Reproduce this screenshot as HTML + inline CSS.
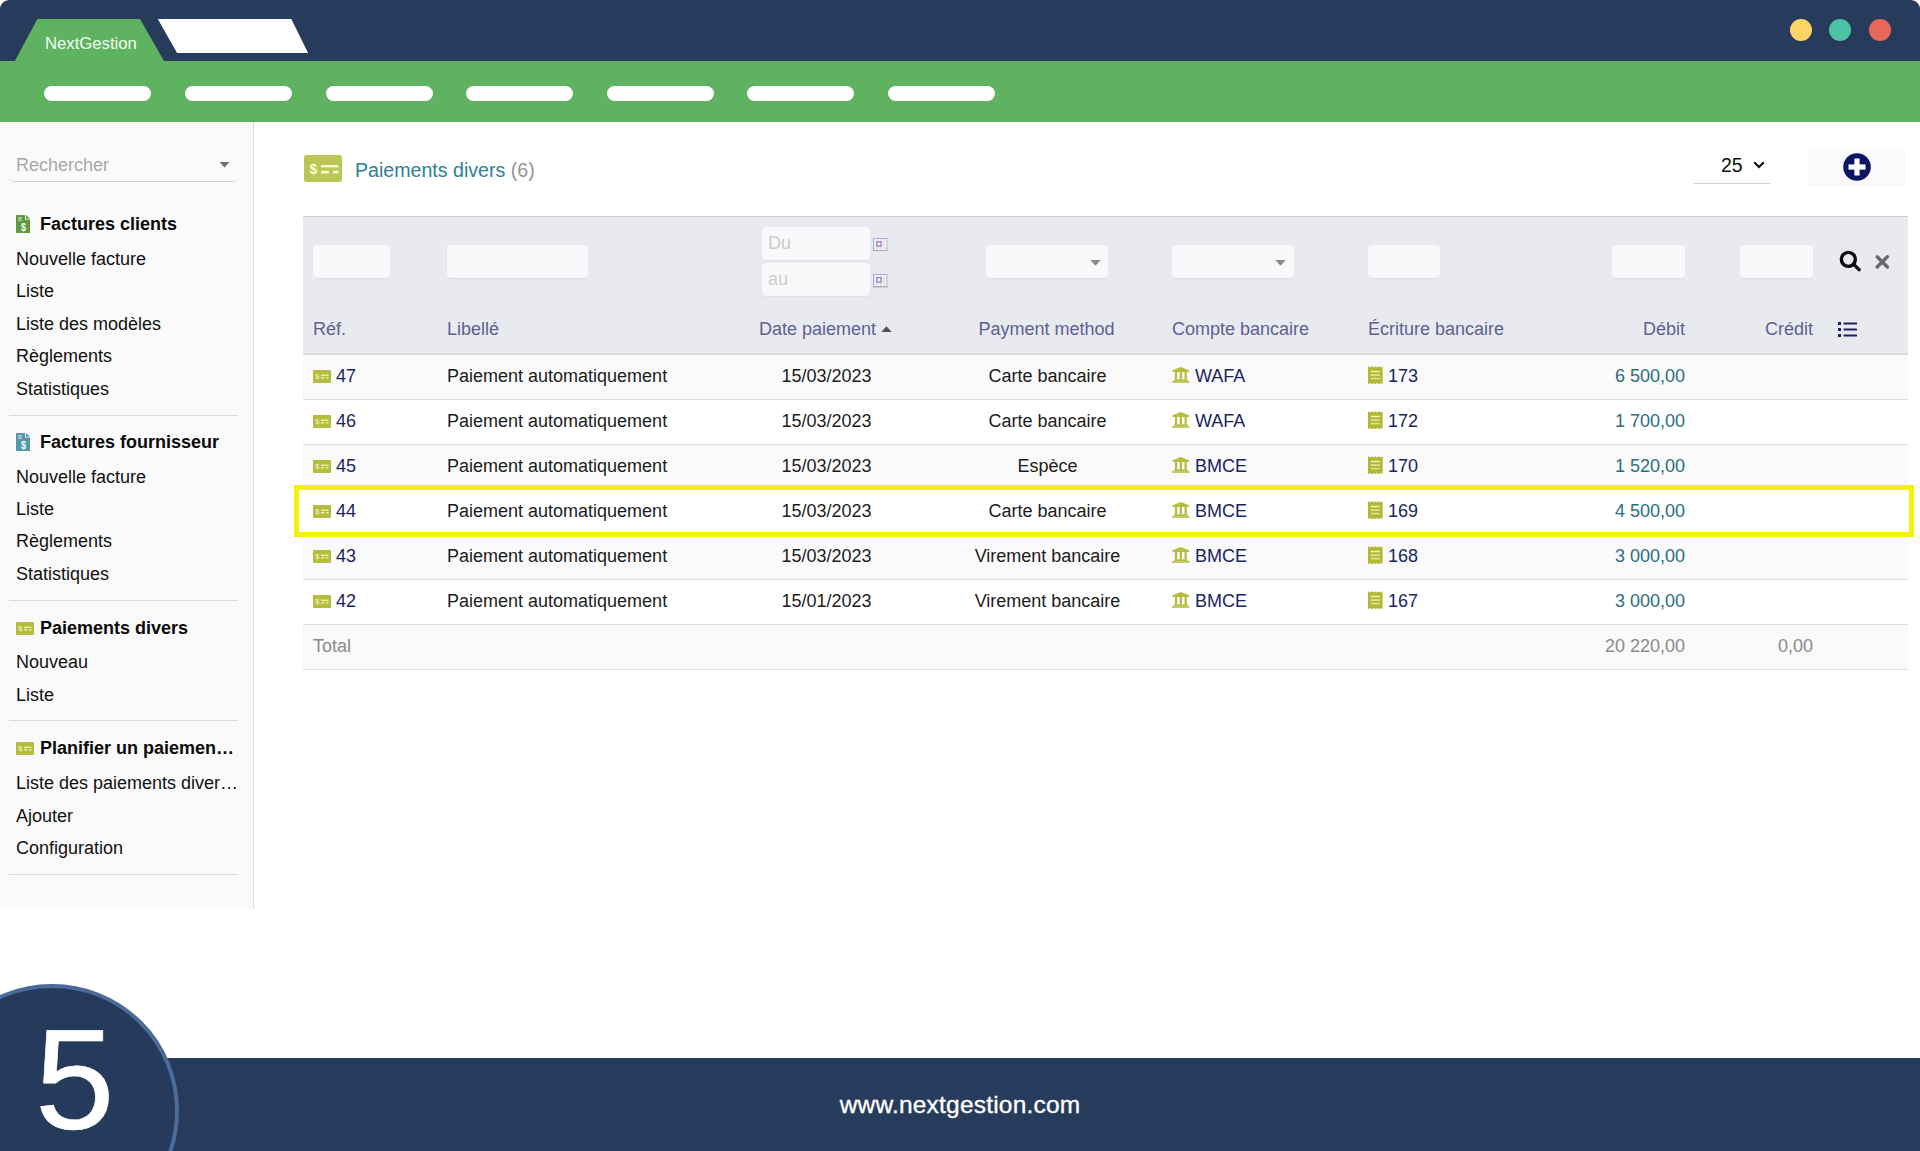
<!DOCTYPE html>
<html lang="fr">
<head>
<meta charset="utf-8">
<title>NextGestion - Paiements divers</title>
<style>
*{box-sizing:border-box;}
html,body{margin:0;padding:0;}
html{width:1920px;height:1151px;overflow:hidden;}
body{width:1920px;height:1151px;position:relative;overflow:hidden;background:#fff;font-family:"Liberation Sans",sans-serif;font-size:18px;color:#1a1a1a;}
.abs{position:absolute;}
#topbar{left:0;top:0;width:1920px;height:61px;background:#273b5c;border-radius:9px 9px 0 0;}
#greenbar{left:0;top:61px;width:1920px;height:61px;background:#5fb260;}
#tabs{left:0;top:0;width:400px;height:62px;}
.tabname{left:45px;top:34px;font-size:16.7px;color:#f2fff0;line-height:20px;white-space:nowrap;}
.pill{top:86px;width:107px;height:15px;border-radius:8px;background:#fff;}
.dot{width:22px;height:22px;border-radius:50%;top:19px;}
/* sidebar */
#sidebar{left:0;top:122px;width:254px;height:787px;background:#fafafa;border-right:1px solid #dcdcdc;}
.sb{left:16px;white-space:nowrap;line-height:22px;font-size:18px;color:#111;}
.sbh{left:40px;font-weight:bold;color:#0a0a0a;}
.sep{left:9px;width:229px;height:1px;background:#dadada;}
/* footer */
#footer{left:0;top:1058px;width:1920px;height:93px;background:#273b5c;}
#circle{left:-74.7px;top:34.3px;width:253.4px;height:253.4px;border-radius:50%;background:#263a5b;border:4.6px solid #4b6b9a;}
#five{left:35px;top:1010px;font-size:143px;line-height:140px;height:140px;overflow:hidden;color:#fff;-webkit-text-stroke:0.6px #fff;}
#url{left:0;width:1920px;top:1090px;text-align:center;color:#fff;font-size:24.5px;line-height:30px;letter-spacing:0.2px;-webkit-text-stroke:0.35px #fff;}
/* content */
#title{left:355px;top:158px;font-size:19.6px;line-height:24px;color:#2b8196;white-space:nowrap;}
#title span{color:#949494;}
#thead{left:303px;top:216px;width:1605px;height:139px;background:#e9eaef;border-top:1px solid #c9c9ce;border-bottom:2px solid #dcdcdf;}
.inp{height:33px;background:#f9f9fb;border-radius:4px;top:245px;box-shadow:0 1px 1px rgba(0,0,0,0.05);}
.ph{color:#cbcbce;font-size:18px;line-height:33px;padding-left:6px;}
.th{top:318px;color:#5c6193;font-size:18px;line-height:22px;white-space:nowrap;}
.row{left:303px;width:1605px;height:45px;border-bottom:1px solid #dedede;}
.odd{background:#fafafa;}
.c{position:absolute;top:11px;line-height:22px;white-space:nowrap;font-size:18px;color:#1c1c1c;}
.nv{color:#1b1f63;}
.tl{color:#2a6f7d;}
.gr{color:#8a8a8a;}
.ctr{text-align:center;}
.rt{text-align:right;}
svg{position:absolute;display:block;}
</style>
</head>
<body>
<!-- window chrome -->
<div id="topbar" class="abs"></div>
<div id="greenbar" class="abs"></div>
<svg id="tabs" class="abs" viewBox="0 0 400 62">
  <polygon points="14.3,62 37.4,19 140,19 164.6,62" fill="#5fb260"/>
  <polygon points="157.8,19 291.3,19 308.1,52.9 177.1,52.9" fill="#ffffff"/>
</svg>
<div class="abs tabname">NextGestion</div>
<div class="abs dot" style="left:1790px;background:#fed466;"></div>
<div class="abs dot" style="left:1829px;background:#4dc2a2;"></div>
<div class="abs dot" style="left:1869px;background:#e86756;"></div>
<div class="abs pill" style="left:44px"></div>
<div class="abs pill" style="left:184.7px"></div>
<div class="abs pill" style="left:325.6px"></div>
<div class="abs pill" style="left:466px"></div>
<div class="abs pill" style="left:606.7px"></div>
<div class="abs pill" style="left:747.3px"></div>
<div class="abs pill" style="left:888px"></div>

<!-- SIDEBAR -->
<div id="sidebar" class="abs"></div>
<div class="abs" style="left:16px;top:154px;font-size:18px;line-height:22px;color:#a8a8a8;">Rechercher</div>
<svg style="left:219px;top:162px" width="11" height="6" viewBox="0 0 11 6"><path d="M0.5 0 H10.5 L5.5 5.6 Z" fill="#6f6f6f"/></svg>
<div class="abs" style="left:9px;top:150px;width:229px;height:31.5px;border-bottom:1.5px solid #d2d2d2;border-radius:5px;"></div>
<svg style="left:16px;top:214.5px" width="14" height="18" viewBox="0 0 14 18"><path d="M0 0.6 Q0 0 0.6 0 H9 V4.5 H14 V17.4 Q14 18 13.4 18 H0.6 Q0 18 0 17.4 Z" fill="#5e9a3e"/><path d="M10 0 L14 3.8 H10 Z" fill="#5e9a3e"/><rect x="2.2" y="2.4" width="3.6" height="1.1" fill="#dfeee0"/><rect x="2.2" y="4.6" width="3.6" height="1.1" fill="#dfeee0"/><text x="0" y="15.6" transform="translate(7.4 0) scale(0.85 1)" font-family="Liberation Sans, sans-serif" font-weight="bold" font-size="10.5" fill="#ffffff" text-anchor="middle">$</text></svg>
<div class="abs sb sbh" style="top:213px;">Factures clients</div>
<div class="abs sb" style="top:248px;">Nouvelle facture</div>
<div class="abs sb" style="top:280px;">Liste</div>
<div class="abs sb" style="top:313px;">Liste des modèles</div>
<div class="abs sb" style="top:345px;">Règlements</div>
<div class="abs sb" style="top:378px;">Statistiques</div>
<div class="abs sep" style="top:415px;"></div>
<svg style="left:16px;top:433px" width="14" height="18" viewBox="0 0 14 18"><path d="M0 0.6 Q0 0 0.6 0 H9 V4.5 H14 V17.4 Q14 18 13.4 18 H0.6 Q0 18 0 17.4 Z" fill="#5598ae"/><path d="M10 0 L14 3.8 H10 Z" fill="#5598ae"/><rect x="2.2" y="2.4" width="3.6" height="1.1" fill="#dfeee0"/><rect x="2.2" y="4.6" width="3.6" height="1.1" fill="#dfeee0"/><text x="0" y="15.6" transform="translate(7.4 0) scale(0.85 1)" font-family="Liberation Sans, sans-serif" font-weight="bold" font-size="10.5" fill="#ffffff" text-anchor="middle">$</text></svg>
<div class="abs sb sbh" style="top:431px;">Factures fournisseur</div>
<div class="abs sb" style="top:466px;">Nouvelle facture</div>
<div class="abs sb" style="top:498px;">Liste</div>
<div class="abs sb" style="top:530px;">Règlements</div>
<div class="abs sb" style="top:563px;">Statistiques</div>
<div class="abs sep" style="top:600px;"></div>
<svg style="left:16px;top:622px" width="18" height="13" viewBox="0 0 18 13"><rect x="0" y="0" width="18" height="13" rx="1" fill="#b5bd3f"/><text x="4.3" y="9.3" font-family="Liberation Sans, sans-serif" font-weight="bold" font-size="7.5" fill="#e8eeb0" text-anchor="middle">$</text><rect x="8" y="4.6" width="7.5" height="1.3" fill="#eef3b8"/><rect x="8" y="7.2" width="3.4" height="1.3" fill="#eef3b8"/><rect x="13" y="7.2" width="2.5" height="1.3" fill="#eef3b8"/></svg>
<div class="abs sb sbh" style="top:617px;">Paiements divers</div>
<div class="abs sb" style="top:651px;">Nouveau</div>
<div class="abs sb" style="top:684px;">Liste</div>
<div class="abs sep" style="top:720px;"></div>
<svg style="left:16px;top:742px" width="18" height="13" viewBox="0 0 18 13"><rect x="0" y="0" width="18" height="13" rx="1" fill="#b5bd3f"/><text x="4.3" y="9.3" font-family="Liberation Sans, sans-serif" font-weight="bold" font-size="7.5" fill="#e8eeb0" text-anchor="middle">$</text><rect x="8" y="4.6" width="7.5" height="1.3" fill="#eef3b8"/><rect x="8" y="7.2" width="3.4" height="1.3" fill="#eef3b8"/><rect x="13" y="7.2" width="2.5" height="1.3" fill="#eef3b8"/></svg>
<div class="abs sb sbh" style="top:737px;width:197px;overflow:hidden;text-overflow:ellipsis;">Planifier un paiement divers</div>
<div class="abs sb" style="top:772px;width:224px;overflow:hidden;text-overflow:ellipsis;">Liste des paiements divers planifiés</div>
<div class="abs sb" style="top:805px;">Ajouter</div>
<div class="abs sb" style="top:837px;">Configuration</div>
<div class="abs sep" style="top:874px;"></div>
<svg style="left:304px;top:155px" width="38" height="27" viewBox="0 0 38 27"><rect x="0" y="0" width="38" height="27" rx="2.5" fill="#bcc656"/><text x="9.5" y="19" font-family="Liberation Sans, sans-serif" font-weight="bold" font-size="14" fill="#f6ffd0" text-anchor="middle">$</text><rect x="17" y="10" width="17.5" height="2.4" fill="#f6ffd0"/><rect x="17" y="15.8" width="8" height="2.6" fill="#f6ffd0"/><rect x="29" y="15.8" width="5.5" height="2.6" fill="#f6ffd0"/></svg>
<div id="title" class="abs">Paiements divers <span>(6)</span></div>
<div class="abs" style="left:1721px;top:154px;font-size:19.5px;line-height:22px;color:#111;">25</div>
<svg style="left:1753px;top:161px" width="12" height="8" viewBox="0 0 12 8"><path d="M1.2 1.2 L6 6 L10.8 1.2" fill="none" stroke="#111" stroke-width="2.2"/></svg>
<div class="abs" style="left:1694px;top:183px;width:76px;height:1px;background:#cfcfcf;"></div>
<div class="abs" style="left:1808px;top:148px;width:97px;height:38px;background:#fafafa;"></div>
<svg style="left:1842.7px;top:152.7px" width="28" height="28" viewBox="0 0 28 28"><circle cx="14" cy="14" r="13.8" fill="#0c1464"/><rect x="11.4" y="5.5" width="5.2" height="17" fill="#fff"/><rect x="5.5" y="11.4" width="17" height="5.2" fill="#fff"/></svg>
<div id="thead" class="abs"></div>
<div class="abs inp" style="left:313px;width:77px;"></div>
<div class="abs inp" style="left:447px;width:141px;"></div>
<div class="abs inp" style="left:986px;width:122px;"></div>
<div class="abs inp" style="left:1172px;width:122px;"></div>
<div class="abs inp" style="left:1368px;width:72px;"></div>
<div class="abs inp" style="left:1612px;width:73px;"></div>
<div class="abs inp" style="left:1740px;width:73px;"></div>
<div class="abs inp ph" style="left:762px;width:108px;top:227px;">Du</div>
<div class="abs inp ph" style="left:762px;width:108px;top:263px;">au</div>
<svg style="left:873px;top:237.8px" width="14.5" height="13.4" viewBox="0 0 14.5 13.4"><rect x="0" y="0" width="14.5" height="13.4" fill="#fafafd"/><path d="M4.3 1 V12 M7.6 1 V12 M10.9 1 V12 M1 3.9 H13.5 M1 7 H13.5 M1 10 H13.5" stroke="#d9d9e3" stroke-width="0.9" fill="none"/><rect x="3.9" y="3.8" width="4.2" height="4.2" fill="#fff" stroke="#8d5fa6" stroke-width="1.1"/><path d="M0 0.5 H14.5 M0.5 0 V13.4" stroke="#a4a8dc" stroke-width="1.1" fill="none"/><path d="M0 12.7 H14.5" stroke="#a8a8a8" stroke-width="1.4" fill="none"/><path d="M14 0.8 V13.4" stroke="#b4b4b8" stroke-width="1" fill="none"/></svg>
<svg style="left:873px;top:274.3px" width="14.5" height="13.4" viewBox="0 0 14.5 13.4"><rect x="0" y="0" width="14.5" height="13.4" fill="#fafafd"/><path d="M4.3 1 V12 M7.6 1 V12 M10.9 1 V12 M1 3.9 H13.5 M1 7 H13.5 M1 10 H13.5" stroke="#d9d9e3" stroke-width="0.9" fill="none"/><rect x="3.9" y="3.8" width="4.2" height="4.2" fill="#fff" stroke="#8d5fa6" stroke-width="1.1"/><path d="M0 0.5 H14.5 M0.5 0 V13.4" stroke="#a4a8dc" stroke-width="1.1" fill="none"/><path d="M0 12.7 H14.5" stroke="#a8a8a8" stroke-width="1.4" fill="none"/><path d="M14 0.8 V13.4" stroke="#b4b4b8" stroke-width="1" fill="none"/></svg>
<svg style="left:1089.6px;top:259.6px" width="11" height="6" viewBox="0 0 11 6"><path d="M0.3 0 H10.7 L5.5 5.8 Z" fill="#8a8a8a"/></svg>
<svg style="left:1274.6px;top:259.6px" width="11" height="6" viewBox="0 0 11 6"><path d="M0.3 0 H10.7 L5.5 5.8 Z" fill="#8a8a8a"/></svg>
<svg style="left:1838.5px;top:250.3px" width="23" height="22" viewBox="0 0 23 22"><circle cx="9.35" cy="9.35" r="7" fill="none" stroke="#0a0a0a" stroke-width="3.4"/><path d="M14.6 14.4 L20.2 19.7" stroke="#0a0a0a" stroke-width="3.3" stroke-linecap="round"/></svg>
<svg style="left:1874px;top:254px" width="16" height="16" viewBox="0 0 16 16"><path d="M3.2 2.8 L13.4 12.9 M13.4 2.8 L3.2 12.9" stroke="#6a6a6a" stroke-width="3.5" stroke-linecap="round"/></svg>
<svg style="left:1838px;top:322px" width="19" height="15" viewBox="0 0 19 15"><g fill="#1b1f63"><rect x="0" y="0" width="3" height="3"/><rect x="0" y="6" width="3" height="3"/><rect x="0" y="12" width="3" height="3"/><rect x="5.5" y="0.4" width="13.5" height="2.2" rx="0.6"/><rect x="5.5" y="6.4" width="13.5" height="2.2" rx="0.6"/><rect x="5.5" y="12.4" width="13.5" height="2.2" rx="0.6"/></g></svg>
<div class="abs th" style="left:313px;">Réf.</div>
<div class="abs th" style="left:447px;">Libellé</div>
<div class="abs th" style="left:759px;">Date paiement</div>
<div class="abs th" style="left:946px;width:201px;text-align:center;">Payment method</div>
<div class="abs th" style="left:1172px;">Compte bancaire</div>
<div class="abs th" style="left:1368px;">Écriture bancaire</div>
<div class="abs th" style="left:1485px;width:200px;text-align:right;">Débit</div>
<div class="abs th" style="left:1613px;width:200px;text-align:right;">Crédit</div>
<svg style="left:881px;top:326px" width="11" height="6" viewBox="0 0 11 6"><path d="M0.3 6 H10.7 L5.5 0.2 Z" fill="#50505f"/></svg>
<div class="row abs odd" style="top:355px;"><svg style="left:10px;top:15px" width="18" height="13" viewBox="0 0 18 13"><rect x="0" y="0" width="18" height="13" rx="1" fill="#b5bd3f"/><text x="4.3" y="9.3" font-family="Liberation Sans, sans-serif" font-weight="bold" font-size="7.5" fill="#e8eeb0" text-anchor="middle">$</text><rect x="8" y="4.6" width="7.5" height="1.3" fill="#eef3b8"/><rect x="8" y="7.2" width="3.4" height="1.3" fill="#eef3b8"/><rect x="13" y="7.2" width="2.5" height="1.3" fill="#eef3b8"/></svg><div class="c nv" style="left:33px;top:10px;">47</div><div class="c" style="left:144px;top:10px;">Paiement automatiquement</div><div class="c ctr" style="left:423px;width:201px;top:10px;">15/03/2023</div><div class="c ctr" style="left:644px;width:201px;top:10px;">Carte bancaire</div><svg style="left:869px;top:12px" width="18" height="16" viewBox="0 0 18 16"><path d="M8.75 0 L17 3.2 V5 H0.5 V3.2 Z" fill="#b5bd3f"/><rect x="2.9" y="5" width="2.3" height="7.4" fill="#b5bd3f"/><rect x="7.7" y="5" width="2.3" height="7.4" fill="#b5bd3f"/><rect x="12.5" y="5" width="2.3" height="7.4" fill="#b5bd3f"/><path d="M2 12.3 H15.8 V14 H2 Z" fill="#b5bd3f"/><path d="M0 14 H17.5 V16 H0 Z" fill="#c3ca66"/></svg><div class="c nv" style="left:892px;top:10px;">WAFA</div><svg style="left:1065px;top:10.6px" width="14.6" height="18.5" viewBox="0 0 15 19"><path d="M0 0.3 L1.9 1.5 L3.75 0.3 L5.6 1.5 L7.5 0.3 L9.4 1.5 L11.25 0.3 L13.1 1.5 L15 0.3 V18.7 L13.1 17.5 L11.25 18.7 L9.4 17.5 L7.5 18.7 L5.6 17.5 L3.75 18.7 L1.9 17.5 L0 18.7 Z" fill="#b0b836"/><rect x="2.8" y="4.9" width="9.4" height="1.5" fill="#f1f7b4"/><rect x="2.8" y="8.6" width="9.4" height="1.5" fill="#e6eca8"/><rect x="2.8" y="12.2" width="9.4" height="1.5" fill="#e0e6a0"/></svg><div class="c nv" style="left:1085px;top:10px;">173</div><div class="c rt tl" style="left:1182px;width:200px;top:10px;">6 500,00</div></div>
<div class="row abs" style="top:400px;"><svg style="left:10px;top:15px" width="18" height="13" viewBox="0 0 18 13"><rect x="0" y="0" width="18" height="13" rx="1" fill="#b5bd3f"/><text x="4.3" y="9.3" font-family="Liberation Sans, sans-serif" font-weight="bold" font-size="7.5" fill="#e8eeb0" text-anchor="middle">$</text><rect x="8" y="4.6" width="7.5" height="1.3" fill="#eef3b8"/><rect x="8" y="7.2" width="3.4" height="1.3" fill="#eef3b8"/><rect x="13" y="7.2" width="2.5" height="1.3" fill="#eef3b8"/></svg><div class="c nv" style="left:33px;top:10px;">46</div><div class="c" style="left:144px;top:10px;">Paiement automatiquement</div><div class="c ctr" style="left:423px;width:201px;top:10px;">15/03/2023</div><div class="c ctr" style="left:644px;width:201px;top:10px;">Carte bancaire</div><svg style="left:869px;top:12px" width="18" height="16" viewBox="0 0 18 16"><path d="M8.75 0 L17 3.2 V5 H0.5 V3.2 Z" fill="#b5bd3f"/><rect x="2.9" y="5" width="2.3" height="7.4" fill="#b5bd3f"/><rect x="7.7" y="5" width="2.3" height="7.4" fill="#b5bd3f"/><rect x="12.5" y="5" width="2.3" height="7.4" fill="#b5bd3f"/><path d="M2 12.3 H15.8 V14 H2 Z" fill="#b5bd3f"/><path d="M0 14 H17.5 V16 H0 Z" fill="#c3ca66"/></svg><div class="c nv" style="left:892px;top:10px;">WAFA</div><svg style="left:1065px;top:10.6px" width="14.6" height="18.5" viewBox="0 0 15 19"><path d="M0 0.3 L1.9 1.5 L3.75 0.3 L5.6 1.5 L7.5 0.3 L9.4 1.5 L11.25 0.3 L13.1 1.5 L15 0.3 V18.7 L13.1 17.5 L11.25 18.7 L9.4 17.5 L7.5 18.7 L5.6 17.5 L3.75 18.7 L1.9 17.5 L0 18.7 Z" fill="#b0b836"/><rect x="2.8" y="4.9" width="9.4" height="1.5" fill="#f1f7b4"/><rect x="2.8" y="8.6" width="9.4" height="1.5" fill="#e6eca8"/><rect x="2.8" y="12.2" width="9.4" height="1.5" fill="#e0e6a0"/></svg><div class="c nv" style="left:1085px;top:10px;">172</div><div class="c rt tl" style="left:1182px;width:200px;top:10px;">1 700,00</div></div>
<div class="row abs odd" style="top:445px;"><svg style="left:10px;top:15px" width="18" height="13" viewBox="0 0 18 13"><rect x="0" y="0" width="18" height="13" rx="1" fill="#b5bd3f"/><text x="4.3" y="9.3" font-family="Liberation Sans, sans-serif" font-weight="bold" font-size="7.5" fill="#e8eeb0" text-anchor="middle">$</text><rect x="8" y="4.6" width="7.5" height="1.3" fill="#eef3b8"/><rect x="8" y="7.2" width="3.4" height="1.3" fill="#eef3b8"/><rect x="13" y="7.2" width="2.5" height="1.3" fill="#eef3b8"/></svg><div class="c nv" style="left:33px;top:10px;">45</div><div class="c" style="left:144px;top:10px;">Paiement automatiquement</div><div class="c ctr" style="left:423px;width:201px;top:10px;">15/03/2023</div><div class="c ctr" style="left:644px;width:201px;top:10px;">Espèce</div><svg style="left:869px;top:12px" width="18" height="16" viewBox="0 0 18 16"><path d="M8.75 0 L17 3.2 V5 H0.5 V3.2 Z" fill="#b5bd3f"/><rect x="2.9" y="5" width="2.3" height="7.4" fill="#b5bd3f"/><rect x="7.7" y="5" width="2.3" height="7.4" fill="#b5bd3f"/><rect x="12.5" y="5" width="2.3" height="7.4" fill="#b5bd3f"/><path d="M2 12.3 H15.8 V14 H2 Z" fill="#b5bd3f"/><path d="M0 14 H17.5 V16 H0 Z" fill="#c3ca66"/></svg><div class="c nv" style="left:892px;top:10px;">BMCE</div><svg style="left:1065px;top:10.6px" width="14.6" height="18.5" viewBox="0 0 15 19"><path d="M0 0.3 L1.9 1.5 L3.75 0.3 L5.6 1.5 L7.5 0.3 L9.4 1.5 L11.25 0.3 L13.1 1.5 L15 0.3 V18.7 L13.1 17.5 L11.25 18.7 L9.4 17.5 L7.5 18.7 L5.6 17.5 L3.75 18.7 L1.9 17.5 L0 18.7 Z" fill="#b0b836"/><rect x="2.8" y="4.9" width="9.4" height="1.5" fill="#f1f7b4"/><rect x="2.8" y="8.6" width="9.4" height="1.5" fill="#e6eca8"/><rect x="2.8" y="12.2" width="9.4" height="1.5" fill="#e0e6a0"/></svg><div class="c nv" style="left:1085px;top:10px;">170</div><div class="c rt tl" style="left:1182px;width:200px;top:10px;">1 520,00</div></div>
<div class="row abs" style="top:490px;"><svg style="left:10px;top:15px" width="18" height="13" viewBox="0 0 18 13"><rect x="0" y="0" width="18" height="13" rx="1" fill="#b5bd3f"/><text x="4.3" y="9.3" font-family="Liberation Sans, sans-serif" font-weight="bold" font-size="7.5" fill="#e8eeb0" text-anchor="middle">$</text><rect x="8" y="4.6" width="7.5" height="1.3" fill="#eef3b8"/><rect x="8" y="7.2" width="3.4" height="1.3" fill="#eef3b8"/><rect x="13" y="7.2" width="2.5" height="1.3" fill="#eef3b8"/></svg><div class="c nv" style="left:33px;top:10px;">44</div><div class="c" style="left:144px;top:10px;">Paiement automatiquement</div><div class="c ctr" style="left:423px;width:201px;top:10px;">15/03/2023</div><div class="c ctr" style="left:644px;width:201px;top:10px;">Carte bancaire</div><svg style="left:869px;top:12px" width="18" height="16" viewBox="0 0 18 16"><path d="M8.75 0 L17 3.2 V5 H0.5 V3.2 Z" fill="#b5bd3f"/><rect x="2.9" y="5" width="2.3" height="7.4" fill="#b5bd3f"/><rect x="7.7" y="5" width="2.3" height="7.4" fill="#b5bd3f"/><rect x="12.5" y="5" width="2.3" height="7.4" fill="#b5bd3f"/><path d="M2 12.3 H15.8 V14 H2 Z" fill="#b5bd3f"/><path d="M0 14 H17.5 V16 H0 Z" fill="#c3ca66"/></svg><div class="c nv" style="left:892px;top:10px;">BMCE</div><svg style="left:1065px;top:10.6px" width="14.6" height="18.5" viewBox="0 0 15 19"><path d="M0 0.3 L1.9 1.5 L3.75 0.3 L5.6 1.5 L7.5 0.3 L9.4 1.5 L11.25 0.3 L13.1 1.5 L15 0.3 V18.7 L13.1 17.5 L11.25 18.7 L9.4 17.5 L7.5 18.7 L5.6 17.5 L3.75 18.7 L1.9 17.5 L0 18.7 Z" fill="#b0b836"/><rect x="2.8" y="4.9" width="9.4" height="1.5" fill="#f1f7b4"/><rect x="2.8" y="8.6" width="9.4" height="1.5" fill="#e6eca8"/><rect x="2.8" y="12.2" width="9.4" height="1.5" fill="#e0e6a0"/></svg><div class="c nv" style="left:1085px;top:10px;">169</div><div class="c rt tl" style="left:1182px;width:200px;top:10px;">4 500,00</div></div>
<div class="row abs odd" style="top:535px;"><svg style="left:10px;top:15px" width="18" height="13" viewBox="0 0 18 13"><rect x="0" y="0" width="18" height="13" rx="1" fill="#b5bd3f"/><text x="4.3" y="9.3" font-family="Liberation Sans, sans-serif" font-weight="bold" font-size="7.5" fill="#e8eeb0" text-anchor="middle">$</text><rect x="8" y="4.6" width="7.5" height="1.3" fill="#eef3b8"/><rect x="8" y="7.2" width="3.4" height="1.3" fill="#eef3b8"/><rect x="13" y="7.2" width="2.5" height="1.3" fill="#eef3b8"/></svg><div class="c nv" style="left:33px;top:10px;">43</div><div class="c" style="left:144px;top:10px;">Paiement automatiquement</div><div class="c ctr" style="left:423px;width:201px;top:10px;">15/03/2023</div><div class="c ctr" style="left:644px;width:201px;top:10px;">Virement bancaire</div><svg style="left:869px;top:12px" width="18" height="16" viewBox="0 0 18 16"><path d="M8.75 0 L17 3.2 V5 H0.5 V3.2 Z" fill="#b5bd3f"/><rect x="2.9" y="5" width="2.3" height="7.4" fill="#b5bd3f"/><rect x="7.7" y="5" width="2.3" height="7.4" fill="#b5bd3f"/><rect x="12.5" y="5" width="2.3" height="7.4" fill="#b5bd3f"/><path d="M2 12.3 H15.8 V14 H2 Z" fill="#b5bd3f"/><path d="M0 14 H17.5 V16 H0 Z" fill="#c3ca66"/></svg><div class="c nv" style="left:892px;top:10px;">BMCE</div><svg style="left:1065px;top:10.6px" width="14.6" height="18.5" viewBox="0 0 15 19"><path d="M0 0.3 L1.9 1.5 L3.75 0.3 L5.6 1.5 L7.5 0.3 L9.4 1.5 L11.25 0.3 L13.1 1.5 L15 0.3 V18.7 L13.1 17.5 L11.25 18.7 L9.4 17.5 L7.5 18.7 L5.6 17.5 L3.75 18.7 L1.9 17.5 L0 18.7 Z" fill="#b0b836"/><rect x="2.8" y="4.9" width="9.4" height="1.5" fill="#f1f7b4"/><rect x="2.8" y="8.6" width="9.4" height="1.5" fill="#e6eca8"/><rect x="2.8" y="12.2" width="9.4" height="1.5" fill="#e0e6a0"/></svg><div class="c nv" style="left:1085px;top:10px;">168</div><div class="c rt tl" style="left:1182px;width:200px;top:10px;">3 000,00</div></div>
<div class="row abs" style="top:580px;"><svg style="left:10px;top:15px" width="18" height="13" viewBox="0 0 18 13"><rect x="0" y="0" width="18" height="13" rx="1" fill="#b5bd3f"/><text x="4.3" y="9.3" font-family="Liberation Sans, sans-serif" font-weight="bold" font-size="7.5" fill="#e8eeb0" text-anchor="middle">$</text><rect x="8" y="4.6" width="7.5" height="1.3" fill="#eef3b8"/><rect x="8" y="7.2" width="3.4" height="1.3" fill="#eef3b8"/><rect x="13" y="7.2" width="2.5" height="1.3" fill="#eef3b8"/></svg><div class="c nv" style="left:33px;top:10px;">42</div><div class="c" style="left:144px;top:10px;">Paiement automatiquement</div><div class="c ctr" style="left:423px;width:201px;top:10px;">15/01/2023</div><div class="c ctr" style="left:644px;width:201px;top:10px;">Virement bancaire</div><svg style="left:869px;top:12px" width="18" height="16" viewBox="0 0 18 16"><path d="M8.75 0 L17 3.2 V5 H0.5 V3.2 Z" fill="#b5bd3f"/><rect x="2.9" y="5" width="2.3" height="7.4" fill="#b5bd3f"/><rect x="7.7" y="5" width="2.3" height="7.4" fill="#b5bd3f"/><rect x="12.5" y="5" width="2.3" height="7.4" fill="#b5bd3f"/><path d="M2 12.3 H15.8 V14 H2 Z" fill="#b5bd3f"/><path d="M0 14 H17.5 V16 H0 Z" fill="#c3ca66"/></svg><div class="c nv" style="left:892px;top:10px;">BMCE</div><svg style="left:1065px;top:10.6px" width="14.6" height="18.5" viewBox="0 0 15 19"><path d="M0 0.3 L1.9 1.5 L3.75 0.3 L5.6 1.5 L7.5 0.3 L9.4 1.5 L11.25 0.3 L13.1 1.5 L15 0.3 V18.7 L13.1 17.5 L11.25 18.7 L9.4 17.5 L7.5 18.7 L5.6 17.5 L3.75 18.7 L1.9 17.5 L0 18.7 Z" fill="#b0b836"/><rect x="2.8" y="4.9" width="9.4" height="1.5" fill="#f1f7b4"/><rect x="2.8" y="8.6" width="9.4" height="1.5" fill="#e6eca8"/><rect x="2.8" y="12.2" width="9.4" height="1.5" fill="#e0e6a0"/></svg><div class="c nv" style="left:1085px;top:10px;">167</div><div class="c rt tl" style="left:1182px;width:200px;top:10px;">3 000,00</div></div>
<div class="row abs odd" style="top:625px;"><div class="c gr" style="left:10px;top:10px;">Total</div><div class="c rt gr" style="left:1182px;width:200px;top:10px;">20 220,00</div><div class="c rt gr" style="left:1310px;width:200px;top:10px;">0,00</div></div>
<div class="abs" style="left:294px;top:485px;width:1620px;height:52px;border:5.4px solid #f5f10a;"></div>
<!-- FOOTER -->
<div id="footer" class="abs"></div>
<div class="abs" style="left:0;top:950px;width:300px;height:201px;overflow:hidden;"><div id="circle" class="abs"></div></div>
<div id="five" class="abs">5</div>
<div id="url" class="abs">www.nextgestion.com</div>
</body>
</html>
